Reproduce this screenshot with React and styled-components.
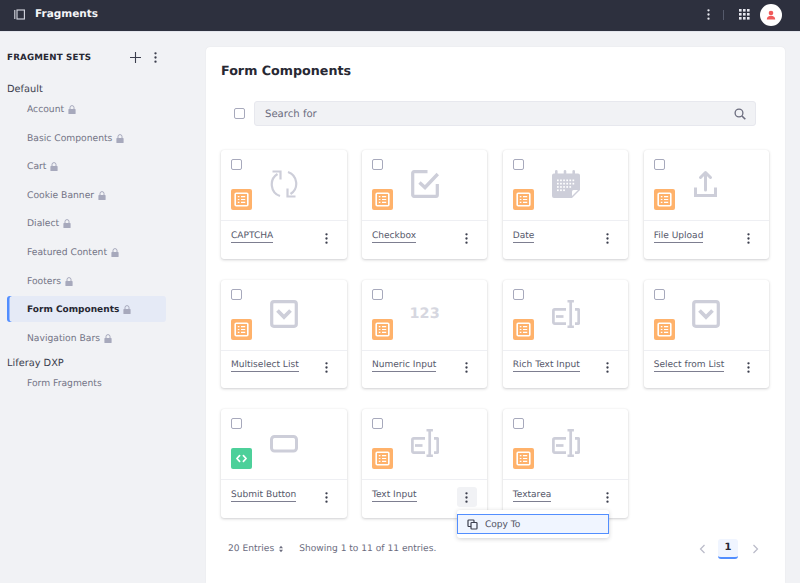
import React from "react";
import styled, { createGlobalStyle } from "styled-components";

const Global = createGlobalStyle`
  html, body { margin: 0; padding: 0; background: #f1f2f5; }
  body { font-family: "DejaVu Sans", sans-serif; color: #272833; overflow: hidden; text-rendering: geometricPrecision; }
  * { box-sizing: border-box; }
`;

const Page = styled.div`
  width: 800px; height: 583px; display: flex; flex-direction: column; overflow: hidden; background: #f1f2f5;
`;
const TopBar = styled.header`
  height: 32px; flex: none; background: #2d303e; border-bottom: 1px solid #e3e5ec;
  display: flex; align-items: center; padding: 0 18px 2px 14px; color: #fff;
`;
const PanelToggle = styled.span`display: flex; width: 11px; height: 11px; margin-right: 10px; color: #d8dae3;`;
const TopTitle = styled.h1`margin: 0; font-size: 10.5px; font-weight: 700; flex: 1; line-height: 14px; color: #f4f5f8; padding-bottom: 1px;`;
const TopKebab = styled.span`display: flex; color: #e6e7ee; width: 14px; justify-content: center;`;
const TopDivider = styled.span`width: 1px; height: 10px; background: #555a6b; margin: 0 15px 0 8px;`;
const AppsIcon = styled.span`display: flex; color: #e6e7ee; margin-right: 10px;`;
const Avatar = styled.span`
  width: 22px; height: 22px; border-radius: 50%; background: #fff; display: flex; align-items: center; justify-content: center;
`;

const Body = styled.div`flex: 1; display: flex; min-height: 0;`;
const Sidebar = styled.aside`width: 206px; flex: none; padding: 15px 0 0 7px;`;
const SideHead = styled.div`display: flex; align-items: center; height: 20px; width: 155px;`;
const SideTitle = styled.h2`margin: 0; padding-top: 2px; font-size: 8.7px; letter-spacing: 0.2px; font-weight: 700; text-transform: uppercase; flex: 1; color: #272833;`;
const SideTool = styled.span`display: flex; color: #3b3e4d; margin-right: ${p => p.$mr || 0}px;`;
const SetName = styled.div`font-size: 9.8px; height: 14px; line-height: 16px; color: #3b3e4d; margin-top: ${p => p.$mt}px;`;
const SetList = styled.ul`list-style: none; margin: 0; padding: 0; display: flex; flex-direction: column; gap: 2.6px; width: 159px;`;
const SetItem = styled.li`
  height: 26px; display: flex; align-items: center; gap: 4px; padding: 2px 0 0 20px; font-size: ${p => p.$active ? 9 : 9.2}px;
  color: ${p => p.$active ? "#272833" : "#737486"}; font-weight: ${p => p.$active ? 700 : 400};
  background: ${p => p.$active ? "#e5eaf6" : "transparent"}; border-radius: 3px;
  box-shadow: ${p => p.$active ? "inset 2.5px 0 0 #528eff" : "none"};
`;
const Lock = styled.span`display: flex; color: #a7a9bc;`;

const Main = styled.main`
  width: 579px; flex: none; background: #fff; margin-top: 15px; border-radius: 4px 4px 0 0; padding: 15px 16px 0 15px;
  box-shadow: 0 0 1px rgba(39,40,51,.12);
`;
const MainTitle = styled.h2`margin: 0; font-size: 12.7px; line-height: 18px; font-weight: 700; color: #272833;`;
const SearchRow = styled.div`display: flex; align-items: center; gap: 9px; margin: 21px 13px 0 13px;`;
const Check = styled.span`
  display: block; flex: none; width: 11px; height: 11px; border: 1px solid #a7a9bc; border-radius: 2px; background: #fff;
`;
const SearchBox = styled.div`
  flex: 1; height: 25px; background: #f1f2f5; border: 1px solid #e7e8ee; border-radius: 3px; display: flex; align-items: center;
  justify-content: space-between; padding: 0 9px 0 10px; font-size: 10.1px; color: #6b6c7e;
`;
const SearchText = styled.span`padding-top: 2px;`;
const Grid = styled.div`
  display: grid; grid-template-columns: repeat(4, 125.5px); column-gap: 15.4px; row-gap: 21px; margin-top: 24px;
`;
const Card = styled.article`
  position: relative; height: 108.5px; background: #fff; border-radius: 3px;
  box-shadow: 0 1px 3px rgba(39,40,51,.22), 0 0 1px rgba(39,40,51,.1);
  display: flex; flex-direction: column;
`;
const CardTop = styled.div`
  position: relative; height: 71px; flex: none; border-bottom: 1px solid #eeeff3; display: flex; align-items: center; justify-content: center; padding-bottom: 2px;
`;
const CardCheck = styled(Check)`position: absolute; left: 10px; top: 9px;`;
const Sticker = styled.span`
  position: absolute; left: 10px; top: 39px; width: 21px; height: 21px; border-radius: 2px;
  background: ${p => p.$green ? "#4dd09a" : "#ffb26b"}; display: flex; align-items: center; justify-content: center;
`;
const Preview = styled.span`display: flex; color: #cdced9;`;
const Numeric = styled.span`font-size: 14.4px; font-weight: 700; color: #d6d7e0; line-height: 28px; padding-top: 1px;`;
const CardFoot = styled.div`
  flex: 1; display: flex; justify-content: space-between; align-items: flex-start; padding: 8.5px 11px 0 10px; position: relative;
`;
const CardName = styled.a`
  font-size: 9.05px; line-height: 12px; height: 13px; color: #55576a; border-bottom: 1px solid #7d7e90;
`;
const Kebab = styled.span`
  position: absolute; right: 10.5px; top: 7px; width: 20px; height: 20px; border-radius: 3px; display: flex; align-items: center; justify-content: center;
  color: #3b3e4d; background: ${p => p.$open ? "#f1f2f5" : "transparent"};
`;
const Menu = styled.div`
  position: absolute; left: 95px; top: 101px; z-index: 3; width: 152px; height: 28px; padding: 4px 0; background: #fff; border-radius: 3px;
  box-shadow: 0 1px 4px rgba(39,40,51,.22);
`;
const MenuItem = styled.div`
  height: 20px; border: 1.5px solid #528eff; background: #f0f5ff; display: flex; align-items: center; padding-left: 9px; gap: 7px;
  font-size: 9.1px; color: #4f5162;
`;
const MenuLabel = styled.span`padding-top: 2px;`;
const Foot = styled.div`
  display: flex; align-items: center; height: 20px; margin-top: 21px; padding: 0 10.5px 0 7px; font-size: 9.1px; color: #6b6c7e;
`;
const Entries = styled.span`display: flex; align-items: center; gap: 4px; margin-right: 15px;`;
const Showing = styled.span`flex: 1;`;
const PageArrow = styled.span`display: flex; color: #b9bac8;`;
const PageNum = styled.span`
  width: 20px; height: 20px; margin: 0 13.5px 0 12.5px; border-radius: 3px; background: #f0f5ff; border-bottom: 2px solid #528eff;
  display: flex; align-items: center; justify-content: center; font-size: 10px; font-weight: 700; color: #272833;
`;

const Dots = ({ size = 14 }) => (
  <svg width={size} height={size} viewBox="0 0 14 14" fill="currentColor">
    <circle cx="7" cy="2.5" r="1.25" /><circle cx="7" cy="7" r="1.25" /><circle cx="7" cy="11.5" r="1.25" />
  </svg>
);
const LockIcon = () => (
  <svg width="8" height="9" viewBox="0 0 8 9" fill="currentColor">
    <path d="M1 4h6a.6.6 0 0 1 .6.6V8.4A.6.6 0 0 1 7 9H1a.6.6 0 0 1-.6-.6V4.6A.6.6 0 0 1 1 4z" />
    <path d="M2 4V2.6a2 2 0 0 1 4 0V4" fill="none" stroke="currentColor" strokeWidth="1" />
  </svg>
);
const TableIcon = () => (
  <svg width="15" height="15" viewBox="0 0 15 15" fill="none" stroke="#fff">
    <rect x="1.2" y="1.2" width="12.6" height="12.6" rx="1" strokeWidth="1.6" />
    <path d="M3.8 4.7h1.6M7 4.7h4.200M3.800 7.500h1.600M7 7.500h4.200M3.800 10.300h1.600M7 10.300h4.200" strokeWidth="1.2" />
  </svg>
);
const CodeIcon = () => (
  <svg width="13" height="13" viewBox="0 0 13 13" fill="none" stroke="#fff" strokeWidth="1.7" strokeLinecap="round" strokeLinejoin="round">
    <path d="M4.6 3.7 1.900 6.500l2.700 2.800M8.400 3.700l2.700 2.800-2.700 2.800" />
  </svg>
);

const svgProps = { width: 28, height: 28, viewBox: "0 0 28 28", fill: "none", stroke: "currentColor" };
const icons = {
  reload: (
    <svg {...svgProps} strokeWidth="2.2">
      <path d="M7.500 4A12.300 12.300 0 0 0 10 26" />
      <path d="M20.500 24A12.300 12.300 0 0 0 18 2" />
      <path d="M2.500 1.500H10.500V9.500" />
      <path d="M25.500 26.500H17.500V18.500" />
    </svg>
  ),
  check: (
    <svg {...svgProps} strokeWidth="3.2">
      <path d="M16.500 1.700H3a1.300 1.300 0 0 0-1.300 1.300V25a1.300 1.300 0 0 0 1.300 1.300H25a1.300 1.300 0 0 0 1.300-1.300V14" />
      <path d="M8.500 12.500l5.500 5L26.800 4" strokeWidth="3.400" />
    </svg>
  ),
  date: (
    <svg {...svgProps} stroke="none">
      <path fill="currentColor" d="M3 3.500V1.300a1.300 1.300 0 0 1 2.600 0v2.200h6.100V1.300a1.300 1.300 0 0 1 2.600 0v2.200h6.100V1.300a1.300 1.300 0 0 1 2.600 0v2.200H26a2 2 0 0 1 2 2V20l-8 8H2a2 2 0 0 1-2-2V5.500a2 2 0 0 1 2-2z" />
      <g fill="#fff">
        {[0,1,2,3].map(r => [0,1,2,3,4,5].filter(c => !(r === 3 && c > 2) && !(r === 2 && c > 4)).map(c => (
          <rect key={`${r}-${c}`} x={5 + c * 3.1} y={9.5 + r * 3.3} width="1.700" height="1.700" />
        )))}
        <path d="M20 26l6-6h-4.500a1.500 1.500 0 0 0-1.500 1.500z" />
      </g>
    </svg>
  ),
  upload: (
    <svg {...svgProps} strokeWidth="3">
      <path d="M13.500 20V2.500M8.500 7.500l5-5 5 5" strokeLinecap="round" strokeLinejoin="round" />
      <path d="M3.500 17.500v8h20v-8" />
    </svg>
  ),
  select: (
    <svg {...svgProps} strokeWidth="3.200">
      <rect x="1.700" y="1.700" width="24.600" height="24.600" rx="2.200" />
      <path d="M7.500 10.500l6.500 6.500 6.500-6.500" strokeWidth="3.800" />
    </svg>
  ),
  text: (
    <svg {...svgProps} strokeWidth="2.700">
      <path d="M14 9.300H2.800a1.400 1.400 0 0 0-1.400 1.400v11.600a1.400 1.400 0 0 0 1.400 1.400H14" />
      <path d="M23 9.300h3.200a.5.500 0 0 1 .5.500v13.400a.5.500 0 0 1-.5.500H23" />
      <path d="M4 16.500h7.500" />
      <path d="M18.700 1v26M15.500 1.200h6.400M15.500 26.800h6.400" />
    </svg>
  ),
  button: (
    <svg {...svgProps} strokeWidth="3">
      <rect x="1.500" y="7.500" width="25" height="14.500" rx="3" />
    </svg>
  ),
};

const sets = ["Account", "Basic Components", "Cart", "Cookie Banner", "Dialect", "Featured Content", "Footers", "Form Components", "Navigation Bars"];
const cards = [
  ["CAPTCHA", "reload"], ["Checkbox", "check"], ["Date", "date"], ["File Upload", "upload"],
  ["Multiselect List", "select"], ["Numeric Input", "num"], ["Rich Text Input", "text"], ["Select from List", "select"],
  ["Submit Button", "button", "green"], ["Text Input", "text", "", "open"], ["Textarea", "text"],
];

export default function App() {
  return (
    <Page>
      <Global />
      <TopBar>
        <PanelToggle>
          <svg width="11" height="11" viewBox="0 0 11 11" fill="none" stroke="currentColor" strokeWidth="1.100">
            <rect x="3" y="1" width="7.400" height="9" /><path d="M.8 1v9" />
          </svg>
        </PanelToggle>
        <TopTitle>Fragments</TopTitle>
        <TopKebab><Dots size={13} /></TopKebab>
        <TopDivider />
        <AppsIcon>
          <svg width="11" height="11" viewBox="0 0 11 11" fill="currentColor">
            {[0,1,2].map(r => [0,1,2].map(c => <rect key={`${r}${c}`} x={c * 4} y={r * 4} width="2.600" height="2.600" />))}
          </svg>
        </AppsIcon>
        <Avatar>
          <svg width="10" height="10" viewBox="0 0 10 10" fill="#f05a5a">
            <circle cx="5" cy="3" r="2.300" /><path d="M.8 9.600C.8 7 2.500 5.800 5 5.800s4.200 1.200 4.200 3.800z" />
          </svg>
        </Avatar>
      </TopBar>
      <Body>
        <Sidebar>
          <SideHead>
            <SideTitle>Fragment Sets</SideTitle>
            <SideTool $mr={7}>
              <svg width="13" height="13" viewBox="0 0 13 13" fill="none" stroke="currentColor" strokeWidth="1.100"><path d="M6.500 1v11M1 6.500h11" /></svg>
            </SideTool>
            <SideTool><Dots size={13} /></SideTool>
          </SideHead>
          <SetName $mt={14.5}>Default</SetName>
          <SetList>
            {sets.map(s => (
              <SetItem key={s} $active={s === "Form Components"}>{s}<Lock><LockIcon /></Lock></SetItem>
            ))}
          </SetList>
          <SetName $mt={5.5}>Liferay DXP</SetName>
          <SetList><SetItem>Form Fragments</SetItem></SetList>
        </Sidebar>
        <Main>
          <MainTitle>Form Components</MainTitle>
          <SearchRow>
            <Check />
            <SearchBox>
              <SearchText>Search for</SearchText>
              <svg width="12" height="12" viewBox="0 0 12 12" fill="none" stroke="#6b6c7e" strokeWidth="1.300">
                <circle cx="5" cy="5" r="3.900" /><path d="M8 8l3.300 3.300" strokeWidth="1.600" />
              </svg>
            </SearchBox>
          </SearchRow>
          <Grid>
            {cards.map(([name, icon, green, open]) => (
              <Card key={name}>
                <CardTop>
                  <CardCheck />
                  <Sticker $green={green === "green"}>{green === "green" ? <CodeIcon /> : <TableIcon />}</Sticker>
                  {icon === "num" ? <Numeric>123</Numeric> : <Preview>{icons[icon]}</Preview>}
                </CardTop>
                <CardFoot>
                  <CardName>{name}</CardName>
                  <Kebab $open={!!open}><Dots size={13} /></Kebab>
                </CardFoot>
                {open && (
                  <Menu>
                    <MenuItem>
                      <svg width="11" height="11" viewBox="0 0 11 11" fill="none" stroke="#3b3e4d" strokeWidth="1.200">
                        <rect x="1" y="1" width="6" height="6.500" rx=".8" /><rect x="4" y="3.500" width="6" height="6.500" rx=".8" fill="#f0f5ff" />
                      </svg>
                      <MenuLabel>Copy To</MenuLabel>
                    </MenuItem>
                  </Menu>
                )}
              </Card>
            ))}
          </Grid>
          <Foot>
            <Entries>20 Entries
              <svg width="6" height="8" viewBox="0 0 6 8" fill="#6b6c7e"><path d="M3 .8 5 3.200H1zM3 7.200 1 4.800h4z" /></svg>
            </Entries>
            <Showing>Showing 1 to 11 of 11 entries.</Showing>
            <PageArrow>
              <svg width="7" height="10" viewBox="0 0 7 10" fill="none" stroke="currentColor" strokeWidth="1.200"><path d="M5.500 1 1.500 5l4 4" /></svg>
            </PageArrow>
            <PageNum>1</PageNum>
            <PageArrow>
              <svg width="7" height="10" viewBox="0 0 7 10" fill="none" stroke="currentColor" strokeWidth="1.200"><path d="M1.500 1l4 4-4 4" /></svg>
            </PageArrow>
          </Foot>
        </Main>
      </Body>
    </Page>
  );
}
